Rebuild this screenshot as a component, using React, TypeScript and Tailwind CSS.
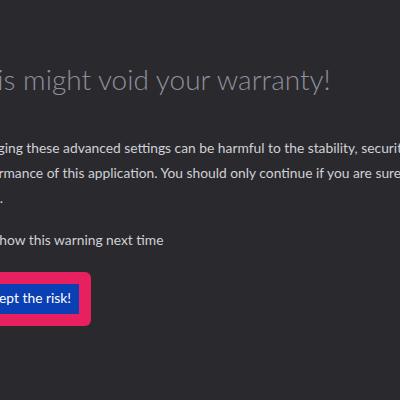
export default function App() {
  return (
    <div className="h-[400px] w-[400px] overflow-hidden bg-[#2a2a2e] font-['Lato',sans-serif]">
      <div className="ml-[-34px] w-[620px] pt-[61px]">
        <h1 className="text-[28px] font-light leading-[36px] text-[#8f8f9d]">
          This might void your warranty!
        </h1>
        <p className="mt-[38px] text-[13.8px] leading-[25px] text-[#d0d0d6]">
          Changing these advanced settings can be harmful to the stability, security, and
          <br />
          performance of this application. You should only continue if you are sure about what you are
          <br />
          doing.
        </p>
        <label className="mt-[20px] flex items-center gap-[10px] text-[13.8px] text-[#d0d0d6]">
          <input type="checkbox" defaultChecked className="h-4 w-4" />
          Show this warning next time
        </label>
        <div className="-ml-[9px] mt-[21px] inline-block rounded-md bg-[#e8205f] p-3">
          <button className="h-[30px] bg-[#0b3fb4] px-2 text-[13.8px] text-white">
            Accept the risk!
          </button>
        </div>
      </div>
    </div>
  );
}
